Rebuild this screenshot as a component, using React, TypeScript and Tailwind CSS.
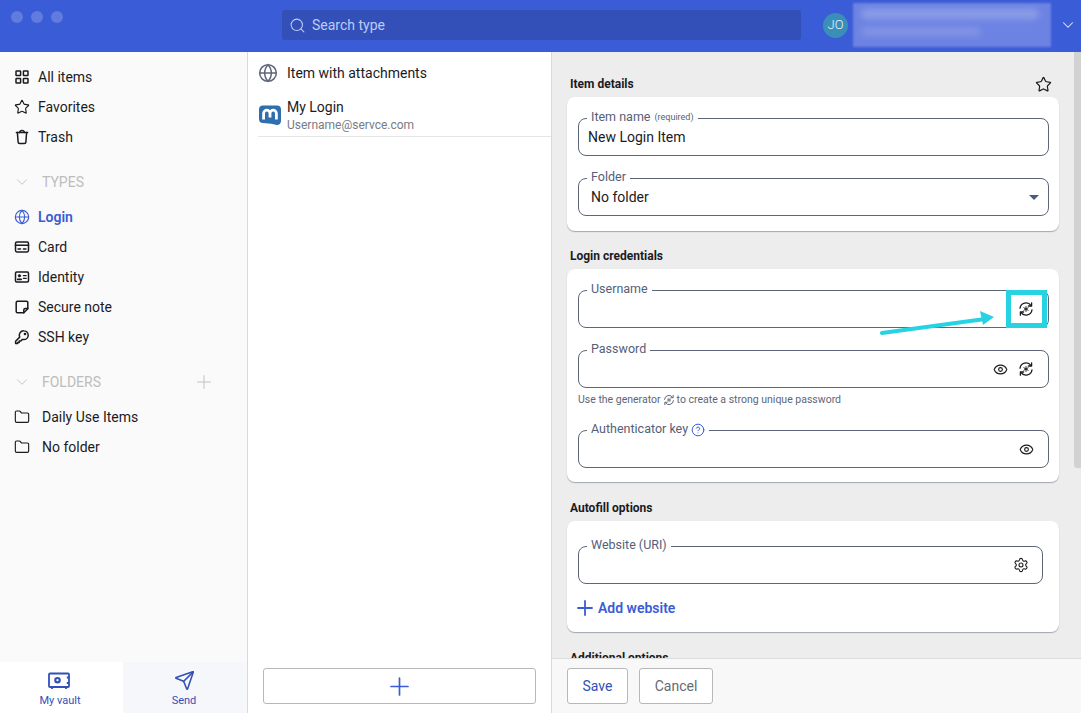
import { ReactNode } from "react";
import {
  ChevronDown,
  CircleHelp,
  Eye,
  Folder,
  Globe,
  Plus,
  Search,
  Send,
  Settings,
  Star,
} from "lucide-react";

const GeneratorIcon = ({ size = 16 }: { size?: number }) => (
  <svg width={size} height={size} viewBox="0 0 16 16" fill="none" stroke="currentColor" strokeWidth={1.3} strokeLinecap="round" strokeLinejoin="round">
    <path d="M2 7.2A6 6 0 0 1 13 4.6" />
    <path d="M13.6 1.8v3.2h-3.2" />
    <path d="M14 8.8A6 6 0 0 1 3 11.4" />
    <path d="M2.4 14.2V11h3.2" />
    <path d="M8 5.6v4.8M5.9 6.8l4.2 2.4M10.1 6.8 5.9 9.2" strokeWidth={1} />
  </svg>
);

const VaultIcon = () => (
  <svg width="22" height="18" viewBox="0 0 22 18" fill="none" stroke="currentColor" strokeWidth={1.8} strokeLinejoin="round">
    <rect x="1" y="1.5" width="20" height="13.5" rx="1" />
    <path d="M4 15v2M18 15v2" />
    <circle cx="9.5" cy="8.2" r="2.2" strokeWidth={2.2} />
    <path d="M21 5.5h-2.2M21 11h-2.2" />
  </svg>
);

const BrandLogo = () => (
  <svg width="22" height="21" viewBox="0 0 22 21">
    <path d="M4 0.5h14a4 4 0 0 1 4 4v11a4 4 0 0 1-4 4.5l-6-1.2-8-0.8a4 4 0 0 1-4-4v-9.5a4 4 0 0 1 4-4z" fill="#2f6fb0" />
    <path d="M4.6 14.5V8.4a2.9 2.9 0 0 1 6.4 0V12.5M11 8.4a2.9 2.9 0 0 1 6.4 0V14.5" fill="none" stroke="#fff" strokeWidth={2.8} />
  </svg>
);

// iconos del menu lateral, dibujados porque lucide no trae estas formas exactas
const Glyph = ({ children }: { children: ReactNode }) => (
  <svg width="16" height="16" viewBox="0 0 16 16" fill="none" stroke="currentColor" strokeWidth={1.5} strokeLinecap="round" strokeLinejoin="round">
    {children}
  </svg>
);

const GridIcon = () => (
  <Glyph>
    <rect x="2" y="2" width="4.6" height="4.6" rx="0.6" />
    <rect x="9.4" y="2" width="4.6" height="4.6" rx="0.6" />
    <rect x="2" y="9.4" width="4.6" height="4.6" rx="0.6" />
    <rect x="9.4" y="9.4" width="4.6" height="4.6" rx="0.6" />
  </Glyph>
);

const TrashIcon = () => (
  <Glyph>
    <path d="M2.4 3.6h11.2" />
    <path d="M3.4 3.6l.7 9.4a1.6 1.6 0 0 0 1.6 1.5h4.6a1.6 1.6 0 0 0 1.6-1.5l.7-9.4" />
    <path d="M5.6 3.4C5.8 2 6.6 1.4 8 1.4s2.2.6 2.4 2" />
  </Glyph>
);

const CardIcon = () => (
  <Glyph>
    <rect x="1.5" y="3" width="13" height="10" rx="1.4" />
    <path d="M1.5 6.2h13" />
    <path d="M4 10h2.6M9.4 10h2.6" strokeWidth={1.3} />
  </Glyph>
);

const IdentityIcon = () => (
  <Glyph>
    <rect x="1.5" y="3" width="13" height="10" rx="1.2" />
    <circle cx="5.4" cy="6.8" r="1.2" fill="currentColor" strokeWidth={0.8} />
    <path d="M3.6 10.4h3.6" strokeWidth={1.6} />
    <path d="M9.4 6.6h2.8M9.4 9.4h2.8" strokeWidth={1.2} />
  </Glyph>
);

const NoteIcon = () => (
  <Glyph>
    <path d="M3.6 2.2h8.8a1.4 1.4 0 0 1 1.4 1.4v6.2l-4 4H3.6a1.4 1.4 0 0 1-1.4-1.4V3.6a1.4 1.4 0 0 1 1.4-1.4z" />
    <path d="M13.8 9.6h-2.6a1.4 1.4 0 0 0-1.4 1.4v2.8" />
  </Glyph>
);

const KeyIcon = () => (
  <Glyph>
    <path d="M9.8 1.8a4.4 4.4 0 0 1 0 8.8c-.5 0-1-.1-1.4-.2L6.8 12H5.2v1.6H3.6v.8H1.6v-2.2l4.1-4.1a4.4 4.4 0 0 1 4.1-6.3z" />
    <circle cx="11" cy="5" r="0.6" fill="currentColor" />
  </Glyph>
);

const NavRow = ({ icon, label, active, indent }: { icon: ReactNode; label: string; active?: boolean; indent?: boolean }) => (
  <div className={`flex h-[30px] items-center pl-[14px] text-[14px] ${active ? "font-semibold text-[#3a5cd6]" : "text-[#1b1b1f]"}`}>
    <span className={`flex justify-start ${indent ? "w-[28px]" : "w-[24px]"}`}>{icon}</span>
    {label}
  </div>
);

const SectionToggle = ({ label, withAdd }: { label: string; withAdd?: boolean }) => (
  <div className="flex h-[30px] items-center pl-[14px] pr-[32px] text-[14px] text-[#bdbdbd]">
    <ChevronDown size={18} strokeWidth={1.2} className="mr-[11px] -ml-[1px]" />
    <span className="flex-1">{label}</span>
    {withAdd && <Plus size={22} strokeWidth={1} />}
  </div>
);

const Field = ({ legend, children, right, className = "" }: { legend: ReactNode; children?: ReactNode; right?: ReactNode; className?: string }) => (
  <fieldset className={`flex h-[46px] rounded-lg border border-[#5d6678] pl-[9px] pr-[14px] ${className}`}>
    <legend className="-ml-[1px] flex h-[16px] items-center px-[4px] pb-[1px] text-[12.5px] leading-none text-[#556078]">{legend}</legend>
    <div className="flex h-[22px] w-full items-center justify-between text-[14px] text-[#1b1b1f]">
      <span>{children}</span>
      {right}
    </div>
  </fieldset>
);

const SectionTitle = ({ children }: { children: ReactNode }) => (
  <h2 className="mb-[5px] h-[16px] pl-[3px] text-[12px] font-bold leading-[16px] text-[#1b1b1f]">{children}</h2>
);

const Card = ({ children, className = "" }: { children: ReactNode; className?: string }) => (
  <div className={`rounded-lg bg-white pl-[11px] pr-[10px] shadow-[0_1px_1px_rgba(70,80,110,0.45)] ${className}`}>{children}</div>
);

export default function App() {
  return (
    <div className="flex h-[713px] w-[1081px] flex-col overflow-hidden bg-white font-['Roboto',sans-serif]">
      {/* Barra superior */}
      <header className="flex h-[52px] shrink-0 items-center bg-[#3a5cd6] pb-[2px]">
        <div className="flex w-[282px] gap-[8px] self-start pl-[11px] pt-[11px]">
          <span className="size-[12px] rounded-full bg-white/20" />
          <span className="size-[12px] rounded-full bg-white/20" />
          <span className="size-[12px] rounded-full bg-white/20" />
        </div>
        <div className="flex h-[30px] w-[519px] items-center gap-[6px] rounded-[3px] bg-[#3250b8] pl-[7px] text-[14px] text-[#bccbf7]">
          <Search size={17} strokeWidth={1.5} />
          Search type
        </div>
        <div className="ml-[22px] flex size-[25px] items-center justify-center rounded-full bg-[#3a8fb8] text-[13px] font-light text-[#e4f3ff]">JO</div>
        <div className="ml-[5px] flex h-[44px] w-[198px] flex-col gap-[8px] bg-[#6d83e3] px-[8px] py-[6px] blur-[1px]">
          <div className="h-[10px] w-[178px] rounded-full bg-[#8c9ee8] blur-[3px]" />
          <div className="h-[9px] w-[120px] rounded-full bg-[#8294e5] blur-[3px]" />
        </div>
        <ChevronDown size={18} strokeWidth={1.4} className="ml-[8px] text-[#e8edff]" />
      </header>

      <div className="flex min-h-0 flex-1">
        {/* Menu lateral */}
        <aside className="flex w-[248px] shrink-0 flex-col border-r border-[#d9d9d9] bg-[#fafafa] pt-[10px]">
          <NavRow icon={<GridIcon />} label="All items" />
          <NavRow icon={<Star size={16} strokeWidth={1.7} />} label="Favorites" />
          <NavRow icon={<TrashIcon />} label="Trash" />
          <div className="mt-[15px] mb-[5px]">
            <SectionToggle label="TYPES" />
          </div>
          <NavRow active icon={<Globe size={16} strokeWidth={1.7} />} label="Login" />
          <NavRow icon={<CardIcon />} label="Card" />
          <NavRow icon={<IdentityIcon />} label="Identity" />
          <NavRow icon={<NoteIcon />} label="Secure note" />
          <NavRow icon={<KeyIcon />} label="SSH key" />
          <div className="mt-[15px] mb-[5px]">
            <SectionToggle label="FOLDERS" withAdd />
          </div>
          <NavRow indent icon={<Folder size={16} strokeWidth={1.7} />} label="Daily Use Items" />
          <NavRow indent icon={<Folder size={16} strokeWidth={1.7} />} label="No folder" />
          <div className="mt-auto flex h-[51px] text-[11px] text-[#3250b8]">
            <div className="flex w-[123px] flex-col items-center justify-end gap-[3px] bg-white pb-[4px] pr-[3px]">
              <span className="-ml-[3px]">
                <VaultIcon />
              </span>
              My vault
            </div>
            <div className="flex flex-1 flex-col items-center justify-end gap-[2px] bg-[#f6f7fa] pb-[4px] pr-[2px]">
              <Send size={21} strokeWidth={1.8} />
              Send
            </div>
          </div>
        </aside>

        {/* Lista de items */}
        <section className="flex w-[304px] shrink-0 flex-col border-r border-[#d9d9d9] bg-white">
          <div className="flex h-[38px] items-center pl-[10px] pt-[5px] text-[14px] text-[#1b1b1f]">
            <Globe size={20} strokeWidth={1.8} className="mr-[9px] -mt-[2px] text-[#5d6678]" />
            Item with attachments
          </div>
          <div className="ml-[10px] flex h-[47px] items-start border-b border-[#e6e6e6] pt-[7px]">
            <span className="mr-[6px] mt-[8px] flex w-[23px] justify-start pl-[1px]">
              <BrandLogo />
            </span>
            <div>
              <div className="text-[14px] leading-[20px] text-[#1b1b1f]">My Login</div>
              <div className="text-[12px] leading-[16px] text-[#777c85]">Username@servce.com</div>
            </div>
          </div>
          <div className="mt-auto px-[15px] pb-[9px]">
            <button className="flex h-[36px] w-full items-center justify-center rounded-[3px] border border-[#b8b8b8] bg-white text-[#3a5cd6]">
              <Plus size={29} strokeWidth={1.4} />
            </button>
          </div>
        </section>

        {/* Detalle del item */}
        <main className="relative flex min-w-0 flex-1 flex-col bg-[#ededed]">
          <div className="min-h-0 flex-1 overflow-hidden pl-[15px] pr-[22px] pt-[24px]">
            <div className="relative">
              <SectionTitle>Item details</SectionTitle>
              <Star size={17} strokeWidth={1.7} className="absolute right-[7px] top-0 text-[#1b1b1f]" />
            </div>
            <Card className="mb-[17px] space-y-[14px] pb-[15px] pt-[13px]">
              <Field
                legend={
                  <>
                    Item name <span className="ml-[4px] text-[9px]">(required)</span>
                  </>
                }
              >
                New Login Item
              </Field>
              <Field legend="Folder" right={<span className="mr-[-5px] h-0 w-0 border-x-[5px] border-t-[5px] border-x-transparent border-t-[#4a5a80]" />}>
                <span className="pl-[3px]">No folder</span>
              </Field>
            </Card>

            <SectionTitle>Login credentials</SectionTitle>
            <Card className="mb-[18px] pb-[14px] pt-[13px]">
              <Field legend="Username" className="mb-[14px]" right={<GeneratorIcon />} />
              <Field
                legend="Password"
                right={
                  <span className="flex items-center gap-[10px]">
                    <Eye size={15} strokeWidth={1.8} />
                    <GeneratorIcon />
                  </span>
                }
              />
              <p className="mb-[16px] mt-[6px] flex h-[12px] items-center gap-[2px] text-[10.5px] text-[#5d6678]">
                Use the generator <GeneratorIcon size={12} /> to create a strong unique password
              </p>
              <Field
                legend={
                  <>
                    Authenticator key <CircleHelp size={14} strokeWidth={1.7} className="ml-[3px] text-[#3a5cd6]" />
                  </>
                }
                right={<Eye size={15} strokeWidth={1.8} />}
              />
            </Card>

            <SectionTitle>Autofill options</SectionTitle>
            <Card className="mb-[18px] pb-[13px] pt-[17px]">
              <Field legend="Website (URI)" className="mr-[6px]" right={<Settings size={16} strokeWidth={1.6} className="-mr-[1px]" />} />
              <div className="mt-[13px] -ml-[5px] flex h-[22px] items-center gap-[1px] text-[14px] font-semibold text-[#3a5cd6]">
                <Plus size={24} strokeWidth={1.8} />
                Add website
              </div>
            </Card>

            <SectionTitle>Additional options</SectionTitle>
          </div>

          <footer className="flex h-[55px] shrink-0 gap-[11px] border-t border-[#dcdcdc] bg-[#f8f8f8] pl-[15px] pt-[9px]">
            <button className="h-[36px] w-[61px] rounded-[3px] border border-[#b8b8b8] bg-white text-[14px] text-[#3250b8]">Save</button>
            <button className="h-[36px] w-[74px] rounded-[3px] border border-[#b8b8b8] bg-white text-[14px] text-[#666a70]">Cancel</button>
          </footer>

          {/* Scrollbar */}
          <div className="absolute right-0 top-0 h-[416px] w-[7px] rounded-bl-[3px] bg-[#d2d2d2]" />

          {/* Anotacion sobre el generador */}
          <div className="absolute left-[454px] top-[238px] h-[38px] w-[41px] border-[5px] border-[#27d3e3]" />
          <svg className="absolute left-[328px] top-[256px]" width="118" height="28" viewBox="0 0 118 28" fill="none">
            <path d="M2 25 105 11" stroke="#27d3e3" strokeWidth={4} strokeLinecap="round" />
            <path d="M100 3 114 9 103 17z" fill="#27d3e3" />
          </svg>
        </main>
      </div>
    </div>
  );
}
